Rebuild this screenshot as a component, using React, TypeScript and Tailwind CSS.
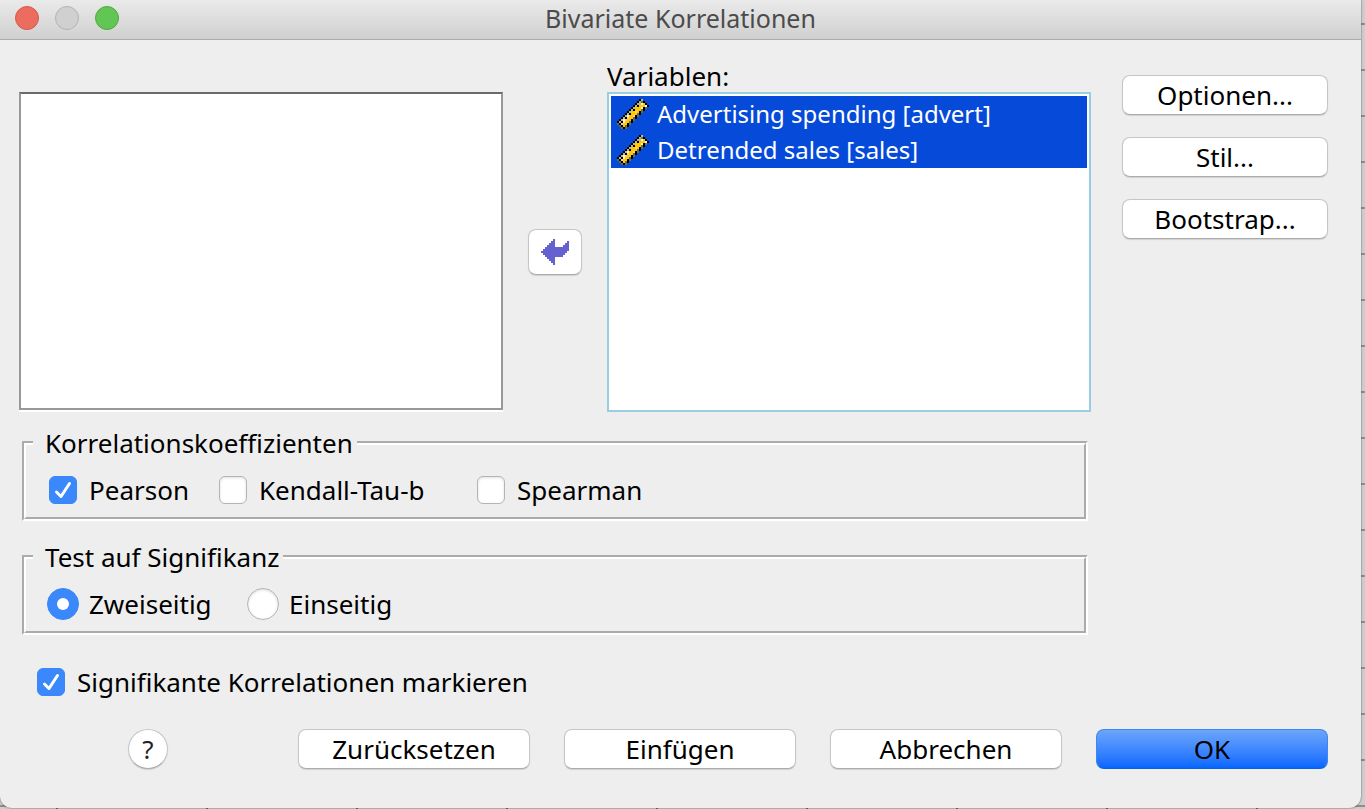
import React, { useState } from 'react';

const rulerColors: Record<string, string> = {
  k: '#000000',
  g: '#b9b98f',
  o: '#6c6d45',
  y: '#ffc800',
  w: '#fff3d0',
  p: '#ffcc99',
};

const rulerRows = [
  '...........kg...',
  '..........kgok..',
  '.........kggwyk.',
  '........kgkyyywk',
  '.......kgyyywko.',
  '......kgkyyyok..',
  '.....kgyypyko...',
  '....kgkyyyok....',
  '...kgwyypko.....',
  '..kgkpyyok......',
  '.kgwpyyko.......',
  'kgkwyyok........',
  'okpyyko.........',
  '.okyok..........',
  '..oko...........',
];

const arrowRows = [
  '......a.......',
  '.....aa......a',
  '....aaa.....aa',
  '...aaaa....aaa',
  '..aaaaaaaaaaaa',
  '.aaaaaaaaaaaaa',
  'aaaaaaaaaaaaa.',
  '.aaaaaaaaaaa..',
  '..aaaaaaaaa...',
  '...aaaa.......',
  '....aaa.......',
  '.....aa.......',
  '......a.......',
];

interface PixelIconProps {
  rows: string[];
  colors: Record<string, string>;
}

// Every cell of the bitmap is drawn 2x2
const PixelIcon: React.FC<PixelIconProps> = ({ rows, colors }) => (
  <svg
    width={rows[0].length * 2}
    height={rows.length * 2}
    viewBox={`0 0 ${rows[0].length} ${rows.length}`}
    shapeRendering="crispEdges"
    aria-hidden="true"
  >
    {rows.map((row, y) =>
      row.split('').map((cell, x) =>
        cell === '.' ? null : <rect key={`${x}-${y}`} x={x} y={y} width={1} height={1} fill={colors[cell]} />
      )
    )}
  </svg>
);

const CheckBox: React.FC<{ label: string; defaultChecked?: boolean }> = ({ label, defaultChecked }) => (
  <label className="flex h-8 items-center gap-3">
    <span className="grid">
      <input
        type="checkbox"
        defaultChecked={defaultChecked}
        className="peer [grid-area:1/1] h-7 w-7 appearance-none rounded-md border border-[#b4b4b4] bg-white shadow-[inset_0_1px_3px_rgba(0,0,0,0.12)] checked:border-[#3a87fb] checked:bg-[#3b88fd] checked:shadow-none"
      />
      <svg
        viewBox="0 0 28 28"
        className="pointer-events-none invisible [grid-area:1/1] h-7 w-7 peer-checked:visible"
        fill="none"
        stroke="white"
        strokeWidth="3"
        strokeLinecap="round"
        strokeLinejoin="round"
      >
        <path d="M7.5 16 L12 20.5 L20.5 7.5" />
      </svg>
    </span>
    {label}
  </label>
);

const Radio: React.FC<{ label: string; defaultChecked?: boolean }> = ({ label, defaultChecked }) => (
  <label className="flex h-8 items-center gap-2.5">
    <span className="grid place-items-center">
      <input
        type="radio"
        name="test"
        defaultChecked={defaultChecked}
        className="peer [grid-area:1/1] h-8 w-8 appearance-none rounded-full border border-[#b4b4b4] bg-white shadow-[inset_0_1px_3px_rgba(0,0,0,0.15)] checked:border-[#3a87fb] checked:bg-[#3b88fd] checked:shadow-none"
      />
      <span className="pointer-events-none invisible [grid-area:1/1] h-3 w-3 rounded-full bg-white peer-checked:visible" />
    </span>
    {label}
  </label>
);

const buttonClass =
  'h-10 rounded-lg border border-[#c6c6c6] border-b-[#ababab] bg-white shadow-[0_1px_1px_rgba(0,0,0,0.12)]';

const groupClass = 'ml-[22px] mr-[273px] border-4 border-white [border-style:groove] pl-[7px] pt-[15px] pb-[11px]';

export default function App() {
  const [selected, setSelected] = useState(['advert', 'sales']);
  const variables = [
    { id: 'advert', label: 'Advertising spending [advert]' },
    { id: 'sales', label: 'Detrended sales [sales]' },
  ];

  const toggle = (id: string) =>
    setSelected(selected.includes(id) ? selected.filter((s) => s !== id) : [...selected, id]);

  return (
    <div className="min-h-screen bg-[#cdcdcd] bg-[repeating-linear-gradient(to_bottom,transparent_0px_23px,#8e8e8e_23px_25px,transparent_25px_46px),repeating-linear-gradient(to_right,transparent_0px_56px,#707070_56px_58px,transparent_58px_150px)] pr-1 pb-px font-['Noto_Sans',sans-serif] text-[26px] leading-8 text-black">
      <div className="flex min-h-[calc(100vh-1px)] flex-col overflow-hidden rounded-b-xl bg-[#eeeeee] shadow-[0_0_2px_rgba(0,0,0,0.6)]">
        {/* Title bar */}
        <header className="grid h-10 grid-cols-[1fr_auto_1fr] items-center border-b border-[#acacac] bg-linear-to-b from-[#eaeaea] to-[#d0d0d0] pb-[3px]">
          <div className="flex gap-4 pl-[15px]">
            <button aria-label="Schließen" className="h-6 w-6 rounded-full border border-[#d9574c] bg-[#ed6c60]" />
            <button aria-label="Minimieren" className="h-6 w-6 rounded-full border border-[#b3b3b3] bg-[#d0d0d0]" />
            <button aria-label="Zoomen" className="h-6 w-6 rounded-full border border-[#4fa83f] bg-[#62c655]" />
          </div>
          <h1 className="text-[25px] text-[#4b4b4b]">Bivariate Korrelationen</h1>
        </header>

        {/* Variable lists */}
        <div className="flex pr-[33px] pl-[19px]">
          <div className="flex-1 pt-[52px]">
            <ul
              role="listbox"
              aria-label="Verfügbare Variablen"
              className="h-[318px] border-2 border-[#989898] border-t-[#6a6a6a] bg-white shadow-[0_2px_0_#ffffff]"
            />
          </div>
          <div className="flex w-[104px] justify-center pt-[189px]">
            <button
              aria-label="Variablen verschieben"
              className="flex h-[46px] w-[54px] items-center justify-center rounded-lg border border-[#c6c6c6] border-b-[#ababab] bg-white shadow-[0_1px_1px_rgba(0,0,0,0.12)]"
            >
              <PixelIcon rows={arrowRows} colors={{ a: '#6562cf' }} />
            </button>
          </div>
          <div className="flex-1 pt-5">
            <h2 id="variablen">Variablen:</h2>
            <ul
              role="listbox"
              aria-labelledby="variablen"
              aria-multiselectable="true"
              className="h-80 border-2 border-[#99cde3] bg-white p-0.5"
            >
              {variables.map((v) => (
                <li
                  key={v.id}
                  role="option"
                  aria-selected={selected.includes(v.id)}
                  onClick={() => toggle(v.id)}
                  className="flex h-9 items-center gap-2 pl-1.5 text-2xl text-black aria-selected:bg-[#064ada] aria-selected:text-white"
                >
                  <PixelIcon rows={rulerRows} colors={rulerColors} />
                  {v.label}
                </li>
              ))}
            </ul>
          </div>
          <div className="ml-[31px] flex w-[206px] flex-col gap-[22px] pt-[35px]">
            <button className={buttonClass}>Optionen...</button>
            <button className={buttonClass}>Stil...</button>
            <button className={buttonClass}>Bootstrap...</button>
          </div>
        </div>

        <fieldset className={`${groupClass} mt-[15px]`}>
          <legend className="pr-1 pl-3">Korrelationskoeffizienten</legend>
          <div className="grid grid-cols-[170px_258px_auto] pl-4">
            <CheckBox label="Pearson" defaultChecked />
            <CheckBox label="Kendall-Tau-b" />
            <CheckBox label="Spearman" />
          </div>
        </fieldset>

        <fieldset className={`${groupClass} mt-5`}>
          <legend className="pr-1 pl-3">Test auf Signifikanz</legend>
          <div className="grid grid-cols-[200px_auto] pl-3.5">
            <Radio label="Zweiseitig" defaultChecked />
            <Radio label="Einseitig" />
          </div>
        </fieldset>

        <div className="mt-[31px] flex pl-[37px]">
          <CheckBox label="Signifikante Korrelationen markieren" defaultChecked />
        </div>

        {/* Dialog buttons */}
        <footer className="mt-[31px] flex gap-[34px] pr-[33px] pb-[39px] pl-32">
          <button
            aria-label="Hilfe"
            className="mr-24 h-10 w-10 rounded-full border border-[#c6c6c6] border-b-[#ababab] bg-white text-[#222222] shadow-[0_1px_1px_rgba(0,0,0,0.12)]"
          >
            ?
          </button>
          <button className={`${buttonClass} flex-1`}>Zurücksetzen</button>
          <button className={`${buttonClass} flex-1`}>Einfügen</button>
          <button className={`${buttonClass} flex-1`}>Abbrechen</button>
          <button className="h-10 flex-1 rounded-lg border border-[#3f86ee] border-b-[#0a5fe8] bg-linear-to-b from-[#6ba5fb] to-[#0467ff]">
            OK
          </button>
        </footer>
      </div>
    </div>
  );
}
